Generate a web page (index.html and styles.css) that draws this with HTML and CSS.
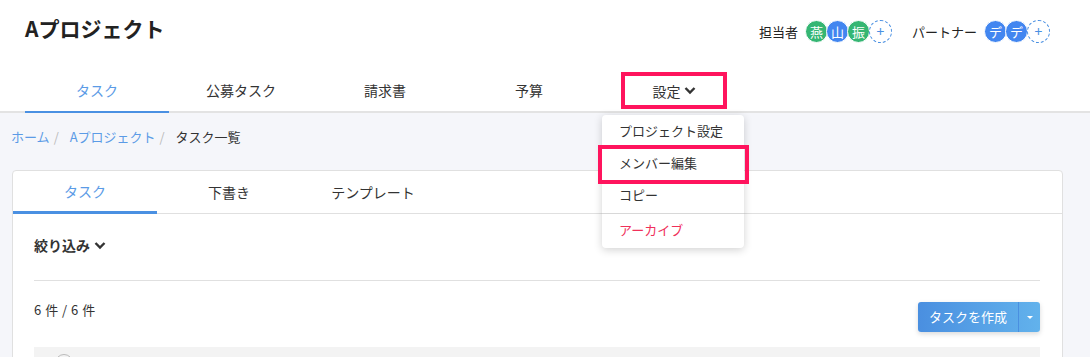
FILE: index.html
```html
<!DOCTYPE html>
<html lang="ja">
<head>
    <meta charset="UTF-8">
    <title>Aプロジェクト</title>
    <link rel="stylesheet" href="styles.css">
</head>
<body>

<header class="kopf">
    <div class="kopf_oben">
        <h1>Aプロジェクト</h1>
        <div class="mitglieder">
            <span class="rolle">担当者</span>
            <div class="avatare">
                <span class="avatar gruen">燕</span>
                <span class="avatar blau">山</span>
                <span class="avatar gruen">振</span>
                <span class="avatar plus">+</span>
            </div>
            <span class="rolle">パートナー</span>
            <div class="avatare">
                <span class="avatar blau">デ</span>
                <span class="avatar blau">デ</span>
                <span class="avatar plus">+</span>
            </div>
        </div>
    </div>
    <nav class="hauptmenu">
        <a href="#" class="reiter aktiv">タスク</a>
        <a href="#" class="reiter">公募タスク</a>
        <a href="#" class="reiter">請求書</a>
        <a href="#" class="reiter">予算</a>
        <div class="reiter einstellung">
            <span class="markiert">設定
                <svg width="12" height="9" viewBox="0 0 12 9"><path d="M1.5 2 L6 6.5 L10.5 2" fill="none" stroke="#333" stroke-width="2.4"/></svg>
            </span>
            <ul class="aufklapp">
                <li><a href="#">プロジェクト設定</a></li>
                <li class="hervor"><a href="#">メンバー編集</a></li>
                <li><a href="#">コピー</a></li>
                <li class="trenner"></li>
                <li><a href="#" class="rot">アーカイブ</a></li>
            </ul>
        </div>
    </nav>
</header>

<main class="inhalt">
    <div class="pfad">
        <a href="#">ホーム</a><span class="strich">/</span>
        <a href="#">Aプロジェクト</a><span class="strich">/</span>
        <span>タスク一覧</span>
    </div>

    <section class="karte">
        <div class="karte_reiter">
            <a href="#" class="unterreiter aktiv">タスク</a>
            <a href="#" class="unterreiter">下書き</a>
            <a href="#" class="unterreiter">テンプレート</a>
        </div>
        <div class="karte_inhalt">
            <div class="filter">絞り込み
                <svg width="12" height="9" viewBox="0 0 12 9"><path d="M1.5 2 L6 6.5 L10.5 2" fill="none" stroke="#333" stroke-width="2.4"/></svg>
            </div>
            <hr>
            <div class="zeile">
                <span class="anzahl">6 件 / 6 件</span>
                <div class="knopf">
                    <a href="#" class="knopf_haupt">タスクを作成</a>
                    <a href="#" class="knopf_pfeil">
                        <svg width="8" height="5" viewBox="0 0 8 5"><path d="M1 1 L4 4 L7 1 Z" fill="#fff"/></svg>
                    </a>
                </div>
            </div>
            <div class="tabelle_kopf">
                <span class="kreis"></span>
            </div>
        </div>
    </section>
</main>

</body>
</html>
```

FILE: styles.css
```css
html, body {
    margin: 0;
    padding: 0;
    background-color: #f5f6fa;
    color: #333;
    font-family: "Noto Sans CJK JP", "Noto Sans", sans-serif;
    font-size: 14px;
}

a {
    text-decoration: none;
    color: inherit;
}

/* Kopfbereich */
.kopf {
    background-color: white;
    padding: 0 40px 0 25px;
    border-bottom: 2px solid #e3e3e3;
}

.kopf_oben {
    display: flex;
    justify-content: space-between;
    align-items: center;
    height: 62px;
}

.kopf h1 {
    margin: 0 0 6px 0;
    font-size: 21px;
    font-weight: bold;
    color: #222;
}

.mitglieder {
    display: flex;
    align-items: center;
    font-size: 13px;
    color: #222;
}

.rolle {
    margin-right: 7px;
}

.avatare {
    display: flex;
    margin-right: 20px;
}

.avatare:last-child {
    margin-right: 0;
}

.avatar {
    width: 21px;
    height: 21px;
    line-height: 21px;
    border-radius: 50%;
    border: 1px solid white;
    margin-left: -2px;
    text-align: center;
    color: white;
    font-size: 13px;
}

.avatar:first-child {
    margin-left: 0;
}

.gruen {
    background-color: #35b673;
}

.blau {
    background-color: #4286f0;
}

.plus {
    border: 1px dashed #4a90e2;
    color: #4a90e2;
    background-color: white;
    font-size: 14px;
    margin-left: -1px;
}

.hauptmenu {
    display: flex;
    height: 40px;
    margin-top: 9px;
}

.reiter {
    width: 144px;
    display: flex;
    justify-content: center;
    align-items: center;
    border-bottom: 2px solid transparent;
    margin-bottom: -2px;
    font-size: 14px;
    padding-bottom: 2px;
    box-sizing: border-box;
}

.reiter.aktiv {
    color: #5b9be6;
    border-bottom-color: #4a90e2;
}

.einstellung {
    position: relative;
    align-items: flex-start;
    padding-bottom: 0;
}

.markiert {
    display: flex;
    align-items: center;
    gap: 3px;
    width: 98px;
    height: 29px;
    justify-content: center;
    border: 4px solid #ff145d;
    margin-left: 2px;
    margin-top: 1px;
}

/* Aufklappmenue */
.aufklapp {
    position: absolute;
    top: 44px;
    left: 1px;
    width: 142px;
    margin: 0;
    padding: 0 0 2px 0;
    list-style-type: none;
    background-color: white;
    border-radius: 4px;
    box-shadow: 0 2px 8px rgba(0,0,0,0.18);
    z-index: 5;
}

.aufklapp li {
    position: relative;
}

.aufklapp li a {
    display: block;
    height: 32px;
    line-height: 32px;
    padding-left: 17px;
    font-size: 13px;
    color: #333;
}

.aufklapp li.hervor::after {
    content: "";
    position: absolute;
    top: -2px;
    bottom: -5px;
    left: -4px;
    right: -5px;
    border: 4px solid #ff145d;
}

.aufklapp .trenner {
    border-top: 1px solid #d8d8d8;
    margin: 2px 0 0 0;
}

.aufklapp .rot {
    color: #f0305a;
}

/* Hauptinhalt */
.inhalt {
    padding: 14px 27px 0 12px;
}

.pfad {
    font-size: 13px;
    line-height: 20px;
    margin-left: -1px;
    margin-bottom: 23px;
}

.pfad a {
    color: #5b9be6;
}

.strich {
    color: #bbb;
    margin: 0 8px 0 4px;
}

.karte {
    background-color: white;
    border: 1px solid #e0e0e0;
    border-radius: 4px;
    height: 400px;
}

.karte_reiter {
    display: flex;
    border-bottom: 1px solid #e0e0e0;
    height: 42px;
}

.unterreiter {
    width: 144px;
    display: flex;
    justify-content: center;
    align-items: center;
    border-bottom: 2px solid transparent;
    margin-bottom: -1px;
    font-size: 14px;
}

.unterreiter.aktiv {
    color: #5b9be6;
    border-bottom: 3px solid #4a90e2;
}

.karte_inhalt {
    padding: 21px 22px 0 21px;
}

.filter {
    display: flex;
    align-items: center;
    gap: 4px;
    font-weight: bold;
    font-size: 14px;
    line-height: 20px;
}

.karte_inhalt hr {
    border: none;
    border-top: 1px solid #e0e0e0;
    margin: 25px 0 0 0;
}

.zeile {
    display: flex;
    justify-content: space-between;
    align-items: flex-start;
    margin-top: 21px;
}

.anzahl {
    font-size: 13px;
    line-height: 16px;
    word-spacing: 1px;
}

.knopf {
    display: flex;
    border-radius: 3px;
    box-shadow: 0 2px 5px rgba(0,0,0,0.15);
    background-image: linear-gradient(to right, #4a8fe0, #62b2ec);
}

.knopf_haupt {
    width: 100px;
    height: 30px;
    line-height: 30px;
    text-align: center;
    color: white;
    font-size: 13px;
    border-right: 1px solid #4a8fe0;
}

.knopf_pfeil {
    width: 21px;
    display: flex;
    justify-content: center;
    align-items: center;
}

.tabelle_kopf {
    margin-top: 15px;
    height: 40px;
    background-color: #f3f3f3;
    padding-left: 21px;
}

.kreis {
    display: inline-block;
    width: 16px;
    height: 16px;
    border-radius: 50%;
    border: 1px solid #bbb;
    margin-top: 7px;
}
```
